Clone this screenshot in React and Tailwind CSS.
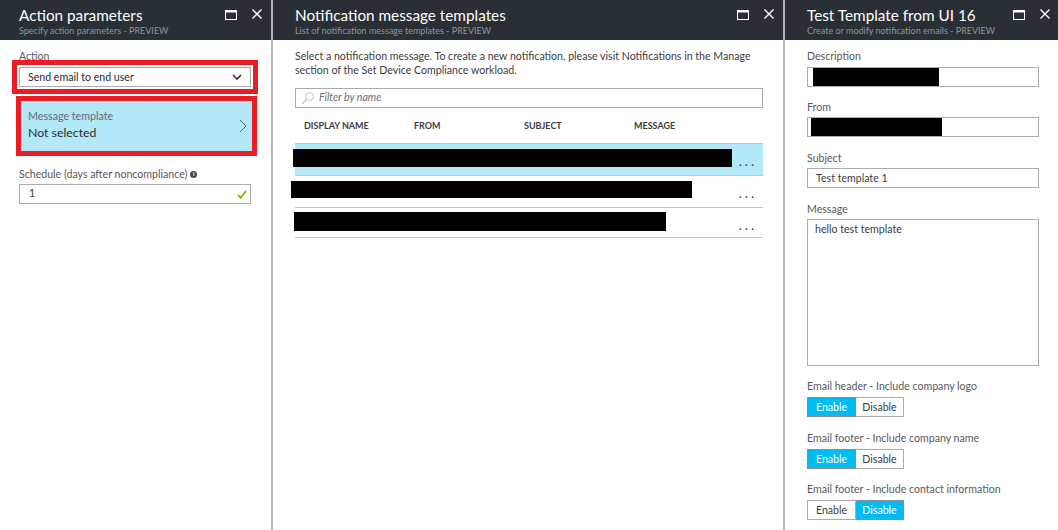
const font = "[font-family:'Lato','Open_Sans',sans-serif]";

function MaxIcon() {
  return (
    <svg width="12" height="10" viewBox="0 0 12 10" className="block">
      <rect x="0.5" y="0.5" width="11" height="9" fill="none" stroke="#ffffff" strokeWidth="1" />
      <rect x="0" y="0" width="12" height="2.5" fill="#ffffff" />
    </svg>
  );
}

function CloseIcon() {
  return (
    <svg width="10" height="10" viewBox="0 0 10 10" className="block">
      <path d="M0.5 0.5 L9.5 9.5 M9.5 0.5 L0.5 9.5" stroke="#ffffff" strokeWidth="1.4" fill="none" />
    </svg>
  );
}

function Header({ title, sub, pad }) {
  return (
    <div className={`flex h-[40px] shrink-0 bg-[#2a2f35] ${pad}`}>
      <div className="flex-1 pt-[6px]">
        <div className="text-[15.3px] leading-[19px] text-white whitespace-nowrap">{title}</div>
        <div className="text-[9px] leading-[11px] text-[#8f969d] whitespace-nowrap">{sub}</div>
      </div>
      <div className="flex items-start gap-[15px] pt-[9px]">
        <div className="pt-[1px]">
          <MaxIcon />
        </div>
        <CloseIcon />
      </div>
    </div>
  );
}

function Label({ children, className = "" }) {
  return <div className={`h-[14px] text-[10.6px] leading-[14px] text-[#595959] whitespace-nowrap ${className}`}>{children}</div>;
}

function Field({ children, className = "" }) {
  return <div className={`flex h-[20px] items-center border border-[#ababab] bg-white text-[10.6px] text-[#3c3c3c] ${className}`}>{children}</div>;
}

function Toggle({ on, className = "" }) {
  const active = "bg-[#00bcf2] text-white border-[#8a8a8a]";
  const idle = "bg-white text-[#3c3c3c] border-[#ababab]";
  return (
    <div className={`flex h-[20px] w-[97px] text-[10.6px] ${className}`}>
      <div className={`flex w-[49px] items-center justify-center border pt-[1px] ${on === "enable" ? active : idle}`}>Enable</div>
      <div className={`flex w-[48px] items-center justify-center border border-l-0 pt-[1px] ${on === "disable" ? active : idle}`}>Disable</div>
    </div>
  );
}

function Row({ selected, height, bar }) {
  return (
    <div className={`flex items-start border-t border-[#c8c8c8] ${height} ${selected ? "bg-[#b2e8f8]" : "bg-white"}`}>
      <div className={`bg-black ${bar}`} />
      <div className="ml-auto pr-[6px] pt-[11px] text-[13px] leading-[13px] tracking-[3px] text-[#3c3c3c]">...</div>
    </div>
  );
}

export default function App() {
  return (
    <div className={`flex h-[530px] w-[1058px] overflow-hidden bg-white ${font}`}>
      <div className="flex w-[271px] shrink-0 flex-col">
        <Header title="Action parameters" sub="Specify action parameters - PREVIEW" pad="pl-[19px] pr-[9px]" />
        <div className="flex flex-col pl-[19px] pt-[9px]">
          <Label>Action</Label>
          <Field className="mt-[4px] w-[232px] pl-[8px] outline-[5px] outline-offset-[2px] outline-[#ed1c24]">
            <span className="flex-1 pt-[1px] text-[#2b2b2b]">Send email to end user</span>
            <svg width="10" height="6" viewBox="0 0 10 6" className="mr-[8px]">
              <path d="M1 1 L5 5 L9 1" fill="none" stroke="#2b2b2b" strokeWidth="1.6" />
            </svg>
          </Field>
          <div className="mt-[14px] ml-[2px] flex h-[50px] w-[231px] items-center bg-[#b2e8f8] pl-[7px] pr-[5px] outline-[5px] outline-[#ed1c24]">
            <div className="flex-1 pb-[2px]">
              <div className="text-[10.7px] leading-[14px] text-[#5f6b70]">Message template</div>
              <div className="mt-[2px] text-[12.3px] leading-[16px] text-[#2b2b2b]">Not selected</div>
            </div>
            <svg width="8" height="14" viewBox="0 0 8 14">
              <path d="M1 1 L7 7 L1 13" fill="none" stroke="#5f6b70" strokeWidth="1" />
            </svg>
          </div>
          <div className="mt-[16px] flex items-center gap-[3px]">
            <Label>Schedule (days after noncompliance)</Label>
            <div className="flex h-[7px] w-[7px] items-center justify-center rounded-full bg-[#4a4a4a] text-[6px] font-bold leading-none text-white">i</div>
          </div>
          <Field className="mt-[3px] w-[232px] pl-[9px]">
            <span className="flex-1">1</span>
            <svg width="10" height="9" viewBox="0 0 10 9" className="mr-[3px]">
              <path d="M1 5 L3.7 7.7 L9 1" fill="none" stroke="#7fba00" strokeWidth="1.8" />
            </svg>
          </Field>
        </div>
      </div>

      <div className="w-[2px] shrink-0 bg-[#b4b4b4]" />

      <div className="flex w-[510px] shrink-0 flex-col">
        <Header title="Notification message templates" sub="List of notification message templates - PREVIEW" pad="pl-[22px] pr-[9px]" />
        <div className="flex flex-col pl-[22px] pr-[20px] pt-[9px]">
          <div className="whitespace-nowrap text-[10.6px] leading-[14px] text-[#3c3c3c]">
            Select a notification message. To create a new notification, please visit Notifications in the Manage
            <br />
            section of the Set Device Compliance workload.
          </div>
          <div className="mt-[11px] flex h-[20px] items-center border border-[#ababab] pl-[5px]">
            <svg width="14" height="14" viewBox="0 0 14 14">
              <circle cx="8.5" cy="5.5" r="4" fill="none" stroke="#c4c4c4" strokeWidth="1" />
              <path d="M5.5 8.5 L1 13" fill="none" stroke="#c4c4c4" strokeWidth="1.4" />
            </svg>
            <span className="ml-[4px] text-[10.6px] italic text-[#6b6b6b]">Filter by name</span>
          </div>
          <div className="flex h-[35px] items-center pl-[9px] pt-[1px] text-[9px] font-bold text-[#3c3c3c]">
            <div className="w-[110px]">DISPLAY NAME</div>
            <div className="w-[110px]">FROM</div>
            <div className="w-[110px]">SUBJECT</div>
            <div>MESSAGE</div>
          </div>
          <Row selected height="h-[32px]" bar="mt-[5px] ml-[-2px] h-[18px] w-[439px]" />
          <Row height="h-[32px]" bar="mt-[5px] ml-[-4px] h-[17px] w-[401px]" />
          <Row height="h-[30px]" bar="mt-[4px] ml-[-1px] h-[19px] w-[372px]" />
          <div className="h-px bg-[#c8c8c8]" />
        </div>
      </div>

      <div className="w-[2px] shrink-0 bg-[#b4b4b4]" />

      <div className="flex min-w-0 flex-1 flex-col">
        <Header title="Test Template from UI 16" sub="Create or modify notification emails - PREVIEW" pad="pl-[22px] pr-[8px]" />
        <div className="flex flex-col pl-[22px] pr-[19px] pt-[9px]">
          <Label>Description</Label>
          <Field className="mt-[4px] items-start">
            <div className="ml-[5px] h-[18px] w-[126px] bg-black" />
          </Field>
          <Label className="mt-[13px]">From</Label>
          <Field className="mt-[3px]">
            <div className="ml-[3px] h-[18px] w-[131px] bg-black" />
          </Field>
          <Label className="mt-[14px]">Subject</Label>
          <Field className="mt-[3px] pl-[8px] pt-[1px]">Test template 1</Field>
          <Label className="mt-[14px]">Message</Label>
          <div className="mt-[3px] h-[147px] border border-[#ababab] pl-[7px] pt-[2px] text-[10.6px] leading-[14px] text-[#3c3c3c]">hello test template</div>
          <Label className="mt-[13px]">Email header - Include company logo</Label>
          <Toggle on="enable" className="mt-[4px]" />
          <Label className="mt-[14px]">Email footer - Include company name</Label>
          <Toggle on="enable" className="mt-[4px]" />
          <Label className="mt-[13px]">Email footer - Include contact information</Label>
          <Toggle on="disable" className="mt-[4px]" />
        </div>
      </div>
    </div>
  );
}
